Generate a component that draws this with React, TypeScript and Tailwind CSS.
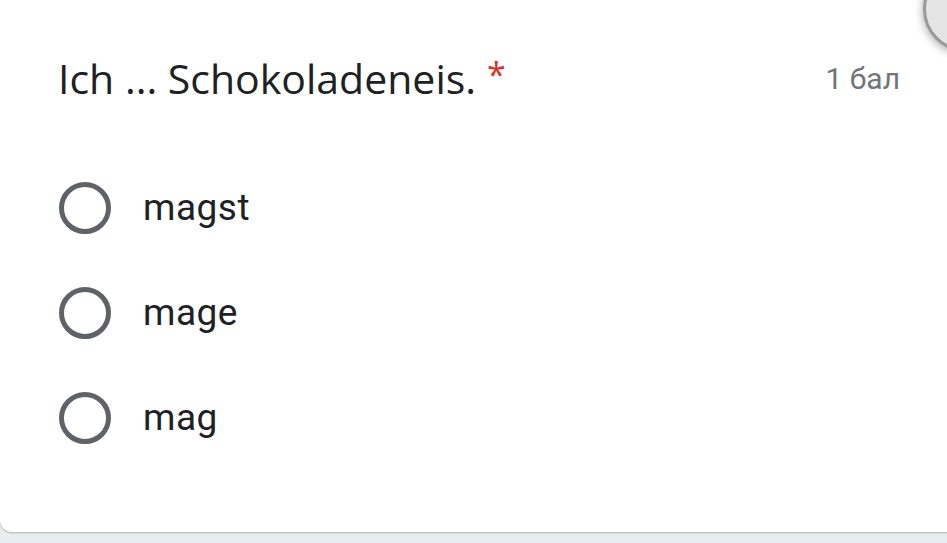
export default function App() {
  const options = ["magst", "mage", "mag"];
  return (
    <div className="w-[947px] h-[543px] bg-[#e8eef0] overflow-hidden relative">
      <div className="w-[970px] h-[532px] bg-white rounded-b-[12px] shadow-[0_1px_2px_rgba(0,0,0,0.25)] flex flex-col relative">
        <div className="w-[947px] flex items-start justify-between pl-[58px] pr-[47px] pt-[50px]">
          <div className="flex items-start text-[41px] text-[#202124] leading-[56px] font-['Open_Sans',sans-serif]">
            <span>Ich ... Schokoladeneis.</span>
            <span className="text-[#d93025] text-[34px] leading-[40px] ml-[11px] mt-[4px]">*</span>
          </div>
          <div className="text-[30px] text-[#70757a] mt-[6px] font-['Roboto',sans-serif]">1 бал</div>
        </div>
        <div className="flex flex-col gap-[53px] pl-[59px] mt-[76px]">
          {options.map((o) => (
            <div key={o} className="flex items-center h-[52px]">
              <div className="w-[52px] h-[52px] rounded-full border-[5px] border-[#5f6368]" />
              <span className="ml-[32px] text-[37px] text-[#202124] font-['Roboto',sans-serif] tracking-[0.5px]">{o}</span>
            </div>
          ))}
        </div>
      </div>
      <div className="absolute right-[-62px] top-[-34px] w-[86px] h-[86px] rounded-full bg-[#e4e4e4] border-[3px] border-[#9a9a9a] shadow-[0_2px_10px_rgba(0,0,0,0.35)]" />
    </div>
  );
}
